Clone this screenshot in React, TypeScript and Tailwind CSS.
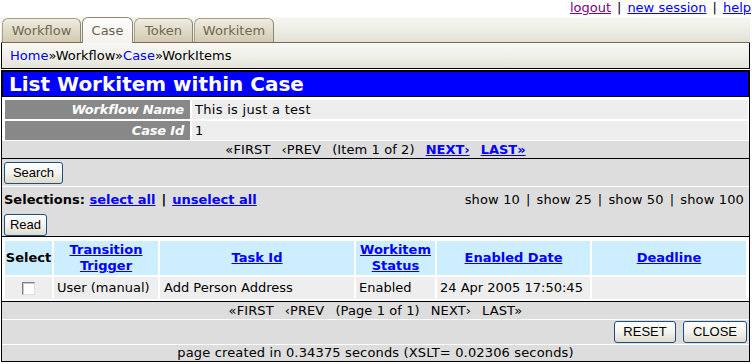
import React from "react";

function Btn({ children, w }: { children: React.ReactNode; w: string }) {
  return (
    <button
      className={`${w} h-[22px] rounded-[3px] border border-[#1d4f85] bg-gradient-to-b from-[#ffffff] via-[#f4f3ee] to-[#dedbcb] font-['Liberation_Sans',Arial,sans-serif] text-[13px] leading-[20px] text-black text-center`}
    >
      {children}
    </button>
  );
}

function Tab({ label, w, active }: { label: string; w: string; active?: boolean }) {
  if (active) {
    return (
      <div
        className={`${w} h-[26px] -mb-[1px] rounded-t-[6px] border border-b-0 border-[#8f8670] bg-gradient-to-b from-[#fdfdfb] to-[#f3f2ec] flex items-center justify-center text-[#6b604b] relative z-10`}
      >
        <span className="mt-[1px]">{label}</span>
      </div>
    );
  }
  return (
    <div
      className={`${w} h-[24px] rounded-t-[6px] border border-b-0 border-[#aaa28a] border-r-[#8e8670] bg-gradient-to-b from-[#efece2] via-[#e0dac8] to-[#d2cab2] flex items-center justify-center text-[#716850]`}
    >
      <span className="mt-[1px]">{label}</span>
    </div>
  );
}

function Pager({ item }: { item: boolean }) {
  return (
    <div className="flex justify-center gap-[11px] text-[13px] leading-[16px] tracking-[0.1px]">
      <span>«FIRST</span>
      <span>‹PREV</span>
      <span>{item ? "(Item 1 of 2)" : "(Page 1 of 1)"}</span>
      {item ? (
        <a className="font-bold text-[#0000ff] underline tracking-normal">NEXT›</a>
      ) : (
        <span>NEXT›</span>
      )}
      {item ? (
        <a className="font-bold text-[#0000ff] underline tracking-normal">LAST»</a>
      ) : (
        <span>LAST»</span>
      )}
    </div>
  );
}

export default function App() {
  return (
    <div className="w-[752px] h-[364px] bg-white overflow-hidden font-['DejaVu_Sans',Verdana,sans-serif] text-[13px] text-black">
      {/* top links */}
      <div className="h-[17px] flex justify-end pr-[1px] leading-[15px] whitespace-pre">
        <a className="text-[#800080] underline">logout</a>
        <span className="mx-[6px]">|</span>
        <a className="text-[#0000ff] underline">new session</a>
        <span className="mx-[6px]">|</span>
        <a className="text-[#0000ff] underline">help</a>
      </div>

      {/* tab strip */}
      <div className="ml-[1px] w-[749px] h-[26px] flex items-end gap-[1px] pl-[1px] border-b border-[#7a6850] bg-gradient-to-b from-[#f7f7f3] via-[#eeeee6] to-[#e3e1d6]">
        <Tab label="Workflow" w="w-[79px]" />
        <Tab label="Case" w="w-[51px]" active />
        <Tab label="Token" w="w-[59px]" />
        <Tab label="Workitem" w="w-[80px]" />
      </div>

      {/* breadcrumb */}
      <div className="ml-[1px] w-[749px] h-[26px] border-x border-b border-black bg-gradient-to-b from-[#f8f8f4] via-[#f0f1ea] to-[#e5e3d9] flex items-center pl-[8px] leading-[16px]">
        <a className="text-[#0000ff]">Home</a>
        <span>»Workflow»</span>
        <a className="text-[#0000ff]">Case</a>
        <span>»WorkItems</span>
      </div>

      <div className="h-[1px]" />

      {/* main */}
      <div className="ml-[1px] w-[749px] border border-black bg-[#dddddd] flex flex-col">
        {/* title */}
        <div className="h-[26px] border border-black bg-[#0000ff] text-white font-bold text-[20px] leading-[24px] pl-[6px]">
          List Workitem within Case
        </div>
        {/* info rows */}
        <div className="bg-white pt-[3px] pb-[1px] pl-[3px] pr-[1px] flex flex-col gap-[2px]">
          <div className="flex gap-[2px] h-[19px]">
            <div className="w-[185px] bg-[#888888] text-white italic font-bold text-right pr-[6px] leading-[19px] tracking-[-0.2px]">
              Workflow Name
            </div>
            <div className="flex-1 bg-[#eeeeee] pl-[3px] leading-[19px] tracking-[0.3px]">This is just a test</div>
          </div>
          <div className="flex gap-[2px] h-[19px]">
            <div className="w-[185px] bg-[#888888] text-white italic font-bold text-right pr-[6px] leading-[19px] tracking-[-0.2px]">
              Case Id
            </div>
            <div className="flex-1 bg-[#eeeeee] pl-[3px] leading-[19px]">1</div>
          </div>
        </div>
        {/* pager 1 */}
        <div className="h-[18px] border-b border-black pt-[1px]">
          <Pager item />
        </div>
        {/* search */}
        <div className="h-[28px] border-b border-white pt-[3px] pl-[2px]">
          <Btn w="w-[59px]">Search</Btn>
        </div>
        {/* selections */}
        <div className="h-[50px] border-b border-black pt-[5px] pl-[2px] pr-[5px] flex flex-col gap-[6px]">
          <div className="flex justify-between leading-[16px] whitespace-pre">
            <div className="font-bold">
              <span>Selections: </span>
              <a className="text-[#0000ff] underline">select all</a>
              <span className="mx-[6px]">|</span>
              <a className="text-[#0000ff] underline">unselect all</a>
            </div>
            <div className="tracking-[0.15px]">
              <span>show 10</span>
              <span className="mx-[6px]">|</span>
              <span>show 25</span>
              <span className="mx-[6px]">|</span>
              <span>show 50</span>
              <span className="mx-[6px]">|</span>
              <span>show 100</span>
            </div>
          </div>
          <div>
            <Btn w="w-[43px]">Read</Btn>
          </div>
        </div>
        {/* table */}
        <div className="h-[65px] border-b border-black bg-white pt-[4px] pl-[3px]">
          <div className="grid grid-cols-[47px_104px_194px_79px_153px_154px] grid-rows-[34px_22px] gap-[2px]">
            <div className="bg-[#cdeefe] flex items-center justify-center font-bold">Select</div>
            <div className="bg-[#cdeefe] flex items-center justify-center text-center font-bold leading-[16px]">
              <a className="text-[#0000ff] underline">
                Transition
                <br />
                Trigger
              </a>
            </div>
            <div className="bg-[#cdeefe] flex items-center justify-center font-bold">
              <a className="text-[#0000ff] underline">Task Id</a>
            </div>
            <div className="bg-[#cdeefe] flex items-center justify-center text-center font-bold leading-[16px]">
              <a className="text-[#0000ff] underline">
                Workitem
                <br />
                Status
              </a>
            </div>
            <div className="bg-[#cdeefe] flex items-center justify-center font-bold">
              <a className="text-[#0000ff] underline">Enabled Date</a>
            </div>
            <div className="bg-[#cdeefe] flex items-center justify-center font-bold">
              <a className="text-[#0000ff] underline">Deadline</a>
            </div>

            <div className="bg-[#eeeeee] flex items-center justify-center">
              <div className="w-[13px] h-[13px] border border-t-[#808080] border-l-[#808080] border-r-[#dcdcdc] border-b-[#dcdcdc] bg-white shadow-[inset_1px_1px_0_#c8c8c8]" />
            </div>
            <div className="bg-[#eeeeee] flex items-center pl-[3px] whitespace-nowrap">User (manual)</div>
            <div className="bg-[#eeeeee] flex items-center pl-[4px]">Add Person Address</div>
            <div className="bg-[#eeeeee] flex items-center pl-[3px]">Enabled</div>
            <div className="bg-[#eeeeee] flex items-center pl-[3px]">24 Apr 2005 17:50:45</div>
            <div className="bg-[#eeeeee]" />
          </div>
        </div>
        {/* pager 2 */}
        <div className="h-[18px] border-b border-white pt-[1px]">
          <Pager item={false} />
        </div>
        {/* buttons */}
        <div className="h-[25px] border-b border-white flex justify-end items-center gap-[7px] pr-[2px]">
          <Btn w="w-[62px]">RESET</Btn>
          <Btn w="w-[64px]">CLOSE</Btn>
        </div>
        {/* footer */}
        <div className="h-[16px] text-center leading-[16px] tracking-[0.15px]">
          page created in 0.34375 seconds (XSLT= 0.02306 seconds)
        </div>
      </div>
    </div>
  );
}
